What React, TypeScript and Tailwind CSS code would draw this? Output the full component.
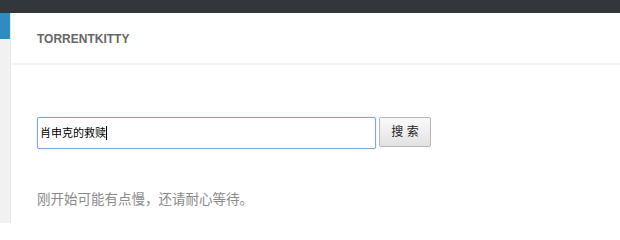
export default function App() {
  return (
    <div
      className="w-[620px] h-[223px] overflow-hidden bg-white flex flex-col"
      style={{ fontFamily: '"Liberation Sans", "Noto Sans CJK SC", sans-serif' }}
    >
      {/* top admin bar */}
      <div className="h-[13px] shrink-0 bg-[#32373c]" />
      <div className="flex flex-1">
        {/* side strip */}
        <div className="w-[11px] shrink-0 bg-[#f1f1f1] border-r border-[#e8e8e8] flex flex-col">
          <div className="h-[26px] bg-[#2f8cc0]" />
        </div>
        {/* content */}
        <div className="flex-1 flex flex-col">
          <div className="h-[52px] flex items-center pl-[26px] pt-[2px] border-b-2 border-[#f3f3f3]">
            <span className="text-[12px] font-bold text-[#666]">TORRENTKITTY</span>
          </div>
          <div className="pl-[26px] pt-[52px] flex items-start gap-[3px]">
            <div className="w-[339px] h-[32px] border border-[#7ea6e0] rounded-[2px] flex items-center pl-[2px] shadow-[0_0_1px_#7ea6e0]">
              <span className="text-[11px] text-black leading-none">肖申克的救赎</span>
              <span className="w-px h-[14px] bg-black" />
            </div>
            <button className="w-[52px] h-[30px] border border-[#b4b4b4] rounded-[2px] bg-gradient-to-b from-[#fafafa] to-[#e2e2e2] text-[12px] text-[#222] leading-none">
              搜 索
            </button>
          </div>
          <div className="pl-[26px] pt-[44px] text-[13.5px] text-[#8a8a8a] leading-none">
            刚开始可能有点慢，还请耐心等待。
          </div>
        </div>
      </div>
    </div>
  );
}
